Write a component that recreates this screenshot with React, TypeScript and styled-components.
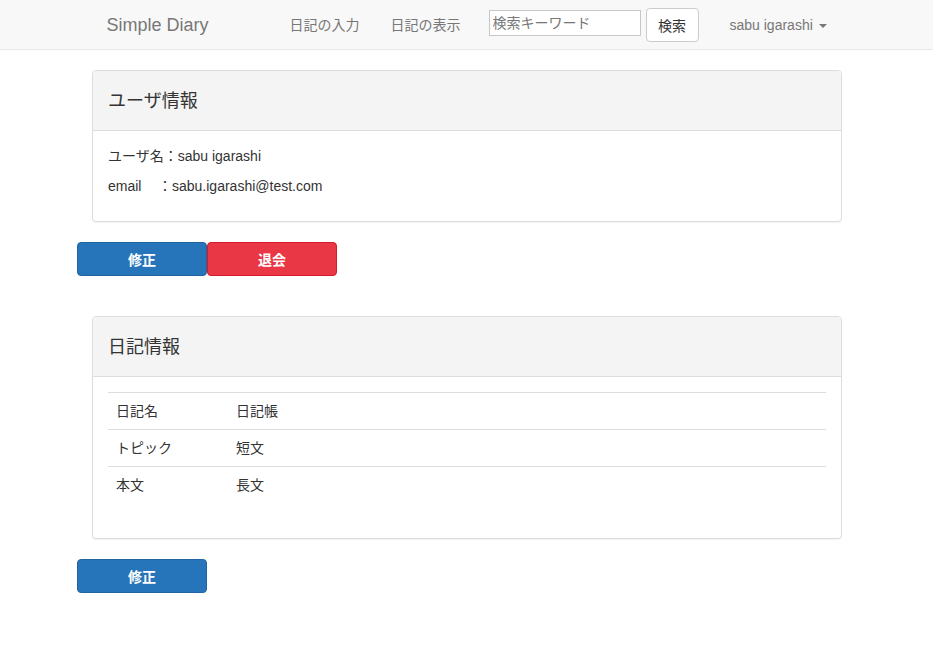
import React from "react";
import styled, { createGlobalStyle } from "styled-components";

const Global = createGlobalStyle`
  html, body { margin: 0; padding: 0; background: #fff; }
  body {
    font-family: "Liberation Sans", "Noto Sans CJK JP", sans-serif;
    font-size: 14px;
    line-height: 20px;
    color: #333;
  }
  * { box-sizing: border-box; }
`;

const NavBar = styled.nav`
  height: 50px;
  background: #f8f8f8;
  border-bottom: 1px solid #e7e7e7;
`;

const NavInner = styled.div`
  width: 750px;
  margin: 0 auto;
  padding: 0 15px;
  height: 49px;
  display: flex;
  align-items: center;
  white-space: nowrap;
`;

const Brand = styled.span`
  font-size: 18px;
  color: #777;
  width: 183px;
  flex-shrink: 0;
`;

const NavLinks = styled.div`
  display: flex;
  gap: 31px;
  margin-right: 28px;
  flex-shrink: 0;
`;

const NavLink = styled.span`
  color: #777;
  font-size: 14px;
`;

const SearchForm = styled.form`
  display: flex;
  align-items: center;
  gap: 5px;
  flex-shrink: 0;
`;

const SearchInput = styled.input`
  width: 152px;
  height: 26px;
  margin-top: -3px;
  border: 1px solid #c8c8c8;
  padding: 0 3px;
  font-family: inherit;
  font-size: 14px;
  color: #333;
  background: #fff;
  &::placeholder { color: #777; }
`;

const SearchButton = styled.button`
  height: 34px;
  width: 53px;
  border: 1px solid #ccc;
  border-radius: 4px;
  background: #fff;
  font-family: inherit;
  font-size: 14px;
  color: #333;
  padding: 0;
`;

const UserMenu = styled.span`
  margin-left: 31px;
  color: #777;
  display: flex;
  align-items: center;
  gap: 6px;
  flex-shrink: 0;
`;

const Caret = styled.span`
  width: 0;
  height: 0;
  border-left: 4px solid transparent;
  border-right: 4px solid transparent;
  border-top: 4px solid #777;
  margin-top: 2px;
`;

const Main = styled.main`
  width: 780px;
  margin: 0 0 0 77px;
  padding-top: 20px;
`;

const Panel = styled.section<{ $mb: number }>`
  margin-left: 15px;
  width: 750px;
  border: 1px solid #ddd;
  border-radius: 4px;
  box-shadow: 0 1px 1px rgba(0, 0, 0, 0.05);
  background: #fff;
  margin-bottom: ${(p) => p.$mb}px;
`;

const PanelHeading = styled.div`
  height: 60px;
  background: #f4f4f4;
  border-bottom: 1px solid #ddd;
  border-radius: 3px 3px 0 0;
  padding: 0 15px;
  display: flex;
  align-items: center;
`;

const PanelTitle = styled.h3`
  margin: 0;
  font-size: 18px;
  font-weight: 400;
  color: #333;
`;

const PanelBody = styled.div`
  padding: 15px;
`;

const Para = styled.p`
  margin: 0 0 10px;
`;

const Label = styled.span<{ $w?: number }>`
  display: inline-block;
  width: ${(p) => (p.$w ? `${p.$w}px` : "auto")};
`;

const Table = styled.table`
  width: 100%;
  border-collapse: collapse;
  margin-bottom: 20px;
`;

const Cell = styled.td<{ $w?: number }>`
  padding: 8px;
  border-top: 1px solid #ddd;
  line-height: 20px;
  vertical-align: top;
  width: ${(p) => (p.$w ? `${p.$w}px` : "auto")};
`;

const ButtonRow = styled.div<{ $mb: number }>`
  display: flex;
  margin-bottom: ${(p) => p.$mb}px;
`;

const ActionButton = styled.button<{ $variant: "primary" | "danger" }>`
  width: 130px;
  height: 34px;
  border-radius: 4px;
  border: 1px solid ${(p) => (p.$variant === "primary" ? "#2264a0" : "#d8192b")};
  background: ${(p) => (p.$variant === "primary" ? "#2675ba" : "#e93745")};
  color: #fff;
  font-family: inherit;
  font-size: 14px;
  font-weight: 700;
  padding: 0;
`;

export default function App() {
  return (
    <>
      <Global />
      <NavBar>
        <NavInner>
          <Brand>Simple Diary</Brand>
          <NavLinks>
            <NavLink>日記の入力</NavLink>
            <NavLink>日記の表示</NavLink>
          </NavLinks>
          <SearchForm onSubmit={(e) => e.preventDefault()}>
            <SearchInput placeholder="検索キーワード" />
            <SearchButton type="submit">検索</SearchButton>
          </SearchForm>
          <UserMenu>
            sabu igarashi <Caret />
          </UserMenu>
        </NavInner>
      </NavBar>
      <Main>
        <Panel $mb={20}>
          <PanelHeading>
            <PanelTitle>ユーザ情報</PanelTitle>
          </PanelHeading>
          <PanelBody>
            <Para>ユーザ名：sabu igarashi</Para>
            <Para>
              <Label $w={50}>email</Label>：sabu.igarashi@test.com
            </Para>
          </PanelBody>
        </Panel>
        <ButtonRow $mb={40}>
          <ActionButton $variant="primary">修正</ActionButton>
          <ActionButton $variant="danger">退会</ActionButton>
        </ButtonRow>
        <Panel $mb={20}>
          <PanelHeading>
            <PanelTitle>日記情報</PanelTitle>
          </PanelHeading>
          <PanelBody>
            <Table>
              <tbody>
                <tr>
                  <Cell $w={120}>日記名</Cell>
                  <Cell>日記帳</Cell>
                </tr>
                <tr>
                  <Cell $w={120}>トピック</Cell>
                  <Cell>短文</Cell>
                </tr>
                <tr>
                  <Cell $w={120}>本文</Cell>
                  <Cell>長文</Cell>
                </tr>
              </tbody>
            </Table>
          </PanelBody>
        </Panel>
        <ButtonRow $mb={40}>
          <ActionButton $variant="primary">修正</ActionButton>
        </ButtonRow>
      </Main>
    </>
  );
}
